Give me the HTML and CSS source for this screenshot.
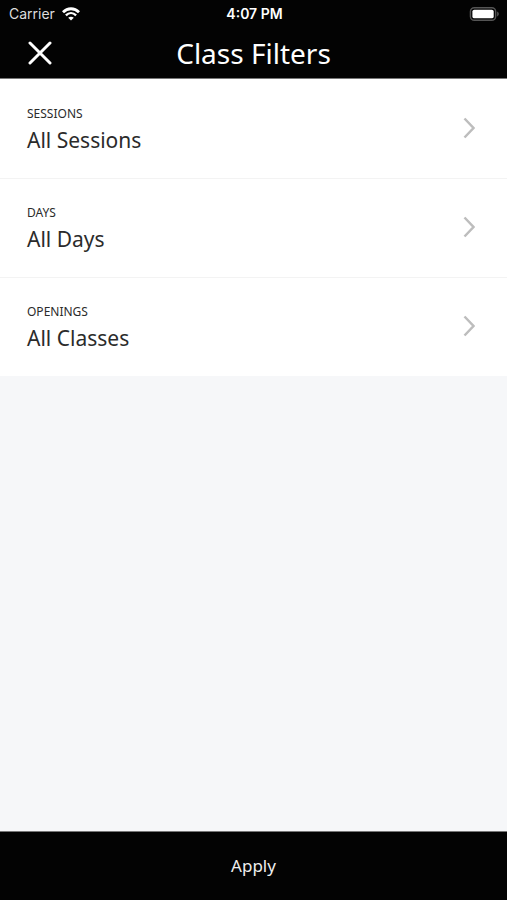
FILE: index.html
```html
<!DOCTYPE html>
<html lang="en">
<head>
<meta charset="utf-8">
<meta name="viewport" content="width=device-width, initial-scale=1">
<title>Class Filters</title>
<link rel="stylesheet" href="styles.css">
</head>
<body>
<header class="header">
  <div class="status">
    <div class="carrier">
      <span>Carrier</span>
      <svg class="wifi" viewBox="0 0 18 14" aria-hidden="true">
        <path d="M1 5.2C5.6.6 12.4.6 17 5.2" fill="none" stroke="#fff" stroke-width="2.8"/>
        <path d="M3.9 8.3c3-2.9 7.2-2.9 10.2 0" fill="none" stroke="#fff" stroke-width="2.4"/>
        <path d="M9 13.6 6.2 10.800c1.600-1.400 4-1.400 5.600 0z" fill="#fff"/>
      </svg>
    </div>
    <time class="clock">4:07 PM</time>
    <svg class="battery" viewBox="0 0 32 16" aria-hidden="true">
      <rect x="1.5" y="1.5" width="26" height="13" rx="4" fill="none" stroke="#555" stroke-width="1.5"/>
      <rect x="3.5" y="3.5" width="22" height="9" rx="2" fill="#fff"/>
      <path d="M29 5.5c2.4 1 2.4 4 0 5z" fill="#555"/>
    </svg>
  </div>
  <div class="titlebar">
    <button class="close" type="button" aria-label="Close">
      <svg viewBox="0 0 24 24" aria-hidden="true"><path d="M2 2 22 22M22 2 2 22" fill="none" stroke="#fff" stroke-width="3" stroke-linecap="round"/></svg>
    </button>
    <h1 class="title">Class Filters</h1>
  </div>
</header>
<main class="filters">
  <button class="row" type="button">
    <span class="text"><span class="label">SESSIONS</span><span class="value">All Sessions</span></span>
    <svg class="chevron" viewBox="0 0 12 22" aria-hidden="true"><path d="M1.5 1.5 10.5 11 1.5 20.5"/></svg>
  </button>
  <button class="row" type="button">
    <span class="text"><span class="label">DAYS</span><span class="value">All Days</span></span>
    <svg class="chevron" viewBox="0 0 12 22" aria-hidden="true"><path d="M1.5 1.5 10.5 11 1.5 20.5"/></svg>
  </button>
  <button class="row" type="button">
    <span class="text"><span class="label">OPENINGS</span><span class="value">All Classes</span></span>
    <svg class="chevron" viewBox="0 0 12 22" aria-hidden="true"><path d="M1.5 1.5 10.5 11 1.5 20.5"/></svg>
  </button>
</main>
<button class="apply" type="button">Apply</button>
</body>
</html>
```
FILE: styles.css
```css
* { box-sizing: border-box; }
body {
  margin: 0;
  min-height: 100vh;
  display: flex;
  flex-direction: column;
  background: #f6f7f9;
  color: #2b2b2b;
  font-family: "Noto Sans", sans-serif;
}
button {
  margin: 0;
  border: 0;
  font-family: inherit;
  color: inherit;
  cursor: pointer;
}
svg { display: block; }
.header {
  background: #030303;
  color: #fff;
  border-bottom: 1px solid #777;
}
.status {
  display: grid;
  grid-template-columns: 1fr auto 1fr;
  align-items: center;
  height: 27px;
  padding: 0 7px 0 9px;
  font: 14px/18px Inter, sans-serif;
}
.carrier { display: flex; align-items: center; gap: 7px; color: #ddd; }
.wifi { width: 18px; height: 14px; }
.clock { font-weight: 600; }
.battery { width: 31px; height: 16px; justify-self: end; }
.titlebar {
  display: grid;
  grid-template-columns: 56px 1fr 56px;
  align-items: center;
  height: 51px;
}
.close { padding: 0 0 0 28px; background: none; }
.close svg { width: 24px; height: 24px; }
.title {
  margin: 0;
  text-align: center;
  font-size: 28px;
  line-height: 36px;
  font-weight: 400;
}
.filters { flex: 1; }
.row {
  display: flex;
  align-items: center;
  justify-content: space-between;
  width: 100%;
  padding: 24px 32px 24px 27px;
  border-top: 1px solid #fff;
  background: #fff;
  text-align: left;
}
.row + .row { border-top-color: #f3f3f3; }
.text { display: flex; flex-direction: column; gap: 2px; }
.label { font-size: 12px; line-height: 20px; }
.value { font-size: 21px; line-height: 28px; }
.chevron {
  width: 12px;
  height: 22px;
  margin-bottom: 2px;
  fill: none;
  stroke: #bdbdbd;
  stroke-width: 2.5;
}
.apply {
  padding: 22px 0;
  border-top: 1px solid #777;
  background: #030303;
  color: #eee;
  font-size: 17px;
  line-height: 24px;
}
```
